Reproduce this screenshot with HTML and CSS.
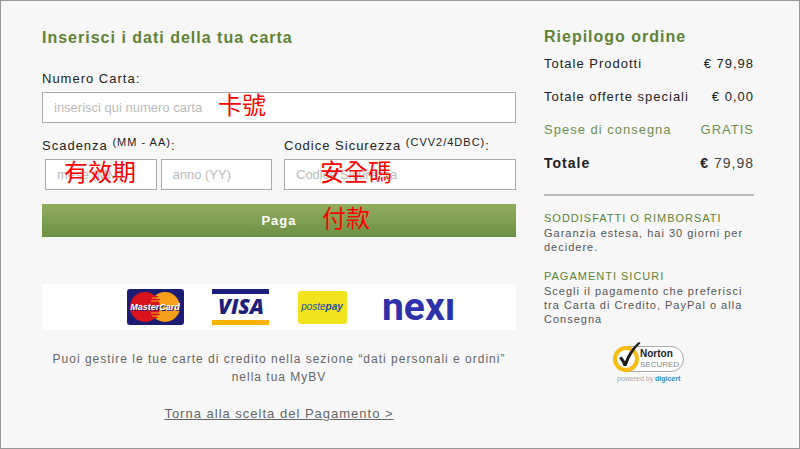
FILE: index.html
```
<!DOCTYPE html>
<html lang="it">
  <head>
    <meta charset="UTF-8" />
    <meta name="viewport" content="width=device-width, initial-scale=1.0" />
    <title>Pagamento</title>
    <link rel="stylesheet" href="styles.css" />
  </head>
  <body>
    <div class="checkout">
      <main class="payment">
        <h1 class="title">Inserisci i dati della tua carta</h1>

        <form class="card-form">
          <div class="field">
            <label class="field-label" for="card-number">Numero Carta:</label>
            <div class="control">
              <input id="card-number" type="text" placeholder="inserisci qui numero carta" />
              <span class="note note-number" lang="zh-Hant">卡號</span>
            </div>
          </div>

          <div class="field-row">
            <div class="field">
              <label class="field-label" for="month">Scadenza <sup>(MM - AA)</sup>:</label>
              <div class="control expiry">
                <input id="month" type="text" placeholder="mese (MM)" />
                <input id="year" type="text" placeholder="anno (YY)" aria-label="Anno di scadenza" />
                <span class="note note-expiry" lang="zh-Hant">有效期</span>
              </div>
            </div>
            <div class="field">
              <label class="field-label" for="cvv">Codice Sicurezza <sup>(CVV2/4DBC)</sup>:</label>
              <div class="control">
                <input id="cvv" type="text" placeholder="Codice Sicurezza" />
                <span class="note note-cvv" lang="zh-Hant">安全碼</span>
              </div>
            </div>
          </div>

          <div class="control">
            <button class="pay-button" type="button">Paga</button>
            <span class="note note-pay" lang="zh-Hant">付款</span>
          </div>
        </form>

        <div class="card-logos">
          <svg width="57" height="36" viewBox="0 0 57 36" role="img" aria-label="MasterCard">
            <rect width="57" height="36" rx="3" fill="#1c1c72" />
            <circle cx="38" cy="18" r="15" fill="#f79f1a" />
            <circle cx="18" cy="18" r="15" fill="#d9131c" />
            <path d="M25 9h7M24 12h9M24 24h9M25 27h7" stroke="#f79f1a" stroke-width="1" />
            <path d="M28 7.500h3M26 10.500h7M25 25.500h8M28 28.500h3" stroke="#d9131c" stroke-width="1" />
            <text class="mc-shadow" x="29" y="22" text-anchor="middle">MasterCard</text>
            <text class="mc-text" x="28" y="21" text-anchor="middle">MasterCard</text>
          </svg>
          <svg width="57" height="36" viewBox="0 0 57 36" role="img" aria-label="Visa">
            <rect width="57" height="5" fill="#1d1f7d" />
            <rect y="31" width="57" height="5" fill="#fbb307" />
            <text class="visa-text" x="29" y="25" text-anchor="middle">VISA</text>
          </svg>
          <svg width="50" height="34" viewBox="0 0 50 34" role="img" aria-label="Postepay">
            <rect width="49" height="33" x="1" y="1" rx="3" fill="#f2e41c" />
            <text class="poste-text" x="25" y="20" text-anchor="middle">poste<tspan class="poste-bold">pay</tspan></text>
          </svg>
          <svg class="nexi" width="80" height="46" viewBox="0 0 80 46" role="img" aria-label="nexi">
            <text class="nexi-text" x="3" y="36">nexı</text>
          </svg>
        </div>

        <p class="hint">Puoi gestire le tue carte di credito nella sezione “dati personali e ordini” nella tua MyBV</p>
        <a class="back-link" href="#">Torna alla scelta del Pagamento &gt;</a>
      </main>

      <aside class="summary">
        <h2 class="title">Riepilogo ordine</h2>
        <dl class="totals">
          <div class="total-row">
            <dt>Totale Prodotti</dt>
            <dd>€ 79,98</dd>
          </div>
          <div class="total-row">
            <dt>Totale offerte speciali</dt>
            <dd>€ 0,00</dd>
          </div>
          <div class="total-row free">
            <dt>Spese di consegna</dt>
            <dd>GRATIS</dd>
          </div>
          <div class="total-row grand">
            <dt>Totale</dt>
            <dd><b>€</b> 79,98</dd>
          </div>
        </dl>

        <section class="info">
          <h3>SODDISFATTI O RIMBORSATI</h3>
          <p>Garanzia estesa, hai 30 giorni per decidere.</p>
        </section>
        <section class="info">
          <h3>PAGAMENTI SICURI</h3>
          <p>Scegli il pagamento che preferisci tra Carta di Credito, PayPal o alla Consegna</p>
        </section>

        <svg class="norton" width="74" height="44" viewBox="0 0 74 44" role="img" aria-label="Norton Secured powered by digicert">
          <path d="M14 6.500h45a12.500 12.500 0 0 1 0 25H14z" fill="#fff" stroke="#a9a9a9" />
          <circle cx="14" cy="19" r="11" fill="#fff" stroke="#fbba14" stroke-width="4" />
          <path d="M7 18l3-1.500 3 5C16 14 20 7.500 27 2l1.500 1C22 9.500 17.500 17 14.500 26h-3C10.500 23 9 20.500 7 18z" fill="#1d1d1b" />
          <text class="norton-name" x="28" y="17">Norton</text>
          <text class="norton-secured" x="28" y="27">SECURED</text>
          <text class="norton-powered" x="5" y="41">powered by</text>
          <text class="norton-digicert" x="43" y="41">digicert</text>
        </svg>
      </aside>
    </div>
  </body>
</html>
```

FILE: styles.css
```
* {
  margin: 0;
  padding: 0;
  box-sizing: border-box;
}

body {
  font-family: "Liberation Sans", Arial, "Noto Sans CJK TC", sans-serif;
  font-size: 13px;
  letter-spacing: 1px;
  color: #222;
  background: #f7f7f7;
  border: 1px solid #999;
  min-height: 100vh;
}

.checkout {
  display: grid;
  grid-template-columns: 474fr 210fr;
  gap: 28px;
  padding: 26px 45px 24px 41px;
}

.title {
  font-size: 16px;
  line-height: 20px;
  color: #5f8236;
}

/* Card form */
.payment {
  display: flex;
  flex-direction: column;
  padding-top: 1px;
}

.card-form {
  display: flex;
  flex-direction: column;
  margin-top: 20px;
}

.field-label {
  display: block;
  height: 24px;
  line-height: 22px;
}

.field-label sup {
  font-size: 11px;
  line-height: 1;
  vertical-align: 4px;
}

.field-row {
  display: grid;
  grid-template-columns: 230fr 232fr;
  gap: 12px;
  margin: 12px 0 14px;
}

.control {
  position: relative;
}

.expiry {
  display: flex;
  gap: 4px;
  padding-left: 3px;
}

input {
  width: 100%;
  min-width: 0;
  height: 31px;
  padding: 0 11px;
  font-family: inherit;
  font-size: 13px;
  color: #222;
  background: #fff;
  border: 1px solid #aaa;
}

input::placeholder {
  color: #bbb;
}

.pay-button {
  display: block;
  width: 100%;
  height: 33px;
  font-family: inherit;
  font-size: 13px;
  font-weight: bold;
  letter-spacing: 1px;
  color: #fff;
  background: linear-gradient(#92ad60, #6c9042);
  border: none;
  cursor: pointer;
}

/* Red notes over the controls */
.note {
  position: absolute;
  top: 50%;
  margin-top: -4px;
  transform: translateY(-50%);
  font-family: "Noto Sans CJK TC", sans-serif;
  font-size: 24px;
  line-height: 30px;
  letter-spacing: 0;
  white-space: nowrap;
  color: #f00;
  pointer-events: none;
}

.note-number {
  left: 176px;
}

.note-expiry {
  left: 22px;
}

.note-cvv {
  left: 36px;
}

.note-pay {
  left: 280px;
}

/* Accepted cards */
.card-logos {
  display: flex;
  align-items: center;
  justify-content: center;
  gap: 28px;
  height: 46px;
  margin-top: 47px;
  padding-left: 28px;
  background: #fff;
}

.card-logos svg {
  letter-spacing: 0;
}

.nexi {
  margin-left: 4px;
}

.mc-text,
.mc-shadow {
  font-size: 9px;
  font-weight: bold;
  font-style: italic;
  fill: #fff;
}

.mc-shadow {
  fill: #1c1c72;
}

.visa-text {
  font-family: "Open Sans", sans-serif;
  font-size: 21px;
  font-weight: 800;
  font-style: italic;
  fill: #1d1f7d;
}

.poste-text {
  font-size: 10px;
  font-style: italic;
  fill: #1c4fa0;
}

.poste-bold {
  font-weight: bold;
}

.nexi-text {
  font-family: Roboto, sans-serif;
  font-size: 39px;
  font-weight: 700;
  fill: #2d32aa;
}

.hint {
  margin-top: 20px;
  font-size: 12px;
  line-height: 18px;
  text-align: center;
  color: #666;
}

.back-link {
  align-self: center;
  margin-top: 19px;
  line-height: 18px;
  color: #666;
}

/* Order summary */
.summary {
  display: flex;
  flex-direction: column;
}

.totals {
  display: flex;
  flex-direction: column;
  gap: 13px;
  margin-top: 7px;
  padding-bottom: 21px;
  border-bottom: 2px solid #bbb;
}

.total-row {
  display: flex;
  justify-content: space-between;
  line-height: 20px;
}

.free {
  color: #6f8f52;
}

.grand {
  font-size: 14px;
}

.grand dt {
  font-weight: bold;
}

.grand dd {
  color: #444;
}

.grand b {
  color: #222;
}

.info {
  margin-top: 14px;
  font-size: 11px;
  line-height: 14px;
  color: #555;
}

.info h3 {
  font-size: 11px;
  font-weight: normal;
  line-height: 16px;
  color: #5f8236;
}

.norton {
  align-self: center;
  margin-top: 14px;
  letter-spacing: 0;
}

.norton-name {
  font-size: 10px;
  font-weight: bold;
  fill: #222;
}

.norton-secured {
  font-size: 8px;
  fill: #888;
}

.norton-powered {
  font-size: 7px;
  fill: #aaa;
}

.norton-digicert {
  font-size: 7px;
  font-weight: bold;
  fill: #2a8fd0;
}
```
